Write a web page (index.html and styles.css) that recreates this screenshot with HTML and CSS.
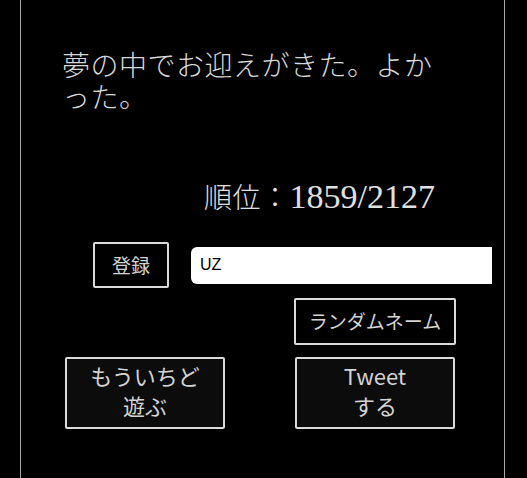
FILE: index.html
```html
<!DOCTYPE html>
<html lang="ja">
<head>
<meta charset="utf-8">
<link rel="stylesheet" href="styles.css">
</head>
<body>
<div class="frame">
  <p class="message">夢の中でお迎えがきた。よかった。</p>
  <p class="rank"><span class="rank-label">順位：</span>1859/2127</p>
  <div class="entry">
    <button class="btn btn-reg">登録</button>
    <input class="name" type="text" value="UZ">
  </div>
  <div class="random-row">
    <button class="btn btn-random">ランダムネーム</button>
  </div>
  <div class="actions">
    <button class="btn btn-big">もういちど<br>遊ぶ</button>
    <button class="btn btn-big">Tweet<br>する</button>
  </div>
</div>
</body>
</html>
```
FILE: styles.css
```css
html, body {
  margin: 0;
  padding: 0;
  background: #000;
}
body {
  width: 527px;
  height: 478px;
  overflow: hidden;
}
.frame {
  box-sizing: border-box;
  margin-left: 20px;
  width: 485px;
  height: 478px;
  border-left: 1px solid #a8a8a8;
  border-right: 1px solid #a8a8a8;
  color: #dcdcdc;
}
.message {
  margin: 0;
  padding: 48px 0 0 41px;
  width: 385px;
  font-family: "Noto Sans CJK JP", sans-serif;
  font-weight: 300;
  font-size: 28px;
  line-height: 32px;
  letter-spacing: 0.5px;
  color: #d8d8d8;
}
.rank {
  margin: 64px 0 0 0;
  padding-left: 183px;
  font-family: "Liberation Serif", "Noto Sans CJK JP", serif;
  font-size: 34px;
  line-height: 40px;
  color: #e0e0e0;
}
.rank-label {
  font-family: "Noto Sans CJK JP", sans-serif;
  font-weight: 300;
  font-size: 28px;
  letter-spacing: 0.5px;
}
.btn {
  box-sizing: border-box;
  background: #0c0c0c;
  border: 2px solid #dadada;
  border-radius: 2px;
  color: #d4d4d4;
  font-family: "Noto Sans CJK JP", sans-serif;
  padding: 0;
  margin: 0;
}
.entry {
  display: flex;
  align-items: center;
  margin-top: 25px;
  padding-left: 72px;
  gap: 22px;
}
.btn-reg {
  width: 76px;
  height: 46px;
  font-size: 19px;
  background: #000;
  padding-bottom: 2px;
}
.name {
  box-sizing: border-box;
  width: 301px;
  height: 37px;
  border: none;
  border-radius: 6px 0 0 6px;
  background: #fff;
  padding: 0 0 0 9px;
  font-family: "Liberation Sans", Arial, sans-serif;
  font-size: 16px;
  color: #000;
  outline: none;
}
.random-row {
  margin-top: 10px;
  padding-left: 273px;
}
.btn-random {
  width: 162px;
  height: 47px;
  font-size: 19px;
  background: #000;
  padding-bottom: 2px;
}
.actions {
  display: flex;
  margin-top: 12px;
  padding-left: 44px;
  gap: 70px;
}
.btn-big {
  width: 160px;
  height: 72px;
  font-size: 22px;
  line-height: 30px;
  padding-bottom: 6px;
}
```
